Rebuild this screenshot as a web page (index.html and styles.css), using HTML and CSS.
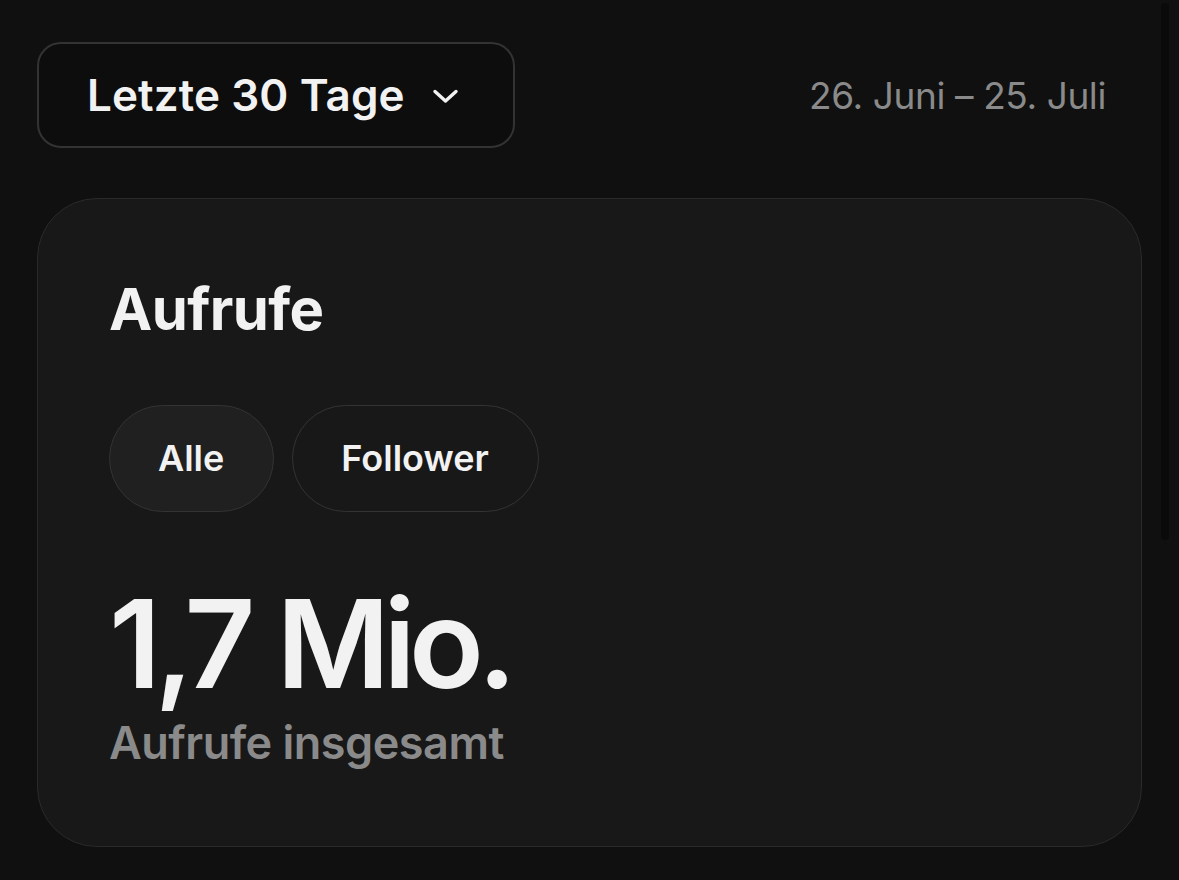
FILE: index.html
```html
<!DOCTYPE html>
<html lang="de">
<head>
<meta charset="utf-8">
<title>Aufrufe</title>
<link rel="stylesheet" href="styles.css">
</head>
<body>
<div class="page">
  <div class="topbar">
    <button class="range-btn" type="button">
      <span class="range-label">Letzte 30 Tage</span>
      <svg class="chev" width="27" height="17" viewBox="0 0 27 17" aria-hidden="true">
        <path d="M3 3.5 L13.5 13 L24 3.5" fill="none" stroke="#f2f2f2" stroke-width="3.4" stroke-linecap="round" stroke-linejoin="round"/>
      </svg>
    </button>
    <div class="date-range">26. Juni – 25. Juli</div>
  </div>

  <section class="card">
    <h2 class="card-title">Aufrufe</h2>
    <div class="pills">
      <button class="pill pill-active" type="button">Alle</button>
      <button class="pill" type="button">Follower</button>
    </div>
    <div class="metric">
      <div class="metric-value">1,7 Mio.</div>
      <div class="metric-label">Aufrufe insgesamt</div>
    </div>
  </section>
</div>
<div class="scroll-thumb"></div>
</body>
</html>
```

FILE: styles.css
```css
html, body {
  margin: 0;
  padding: 0;
  background: #101010;
  height: 100%;
  overflow: hidden;
}

body {
  font-family: Inter, "Noto Sans", "Liberation Sans", sans-serif;
  color: #f2f2f2;
}

.page {
  padding: 42px 37px 0 37px;
}

.topbar {
  display: flex;
  align-items: center;
  justify-content: space-between;
  padding-right: 36px;
}

.range-btn {
  display: flex;
  align-items: center;
  gap: 27px;
  height: 106px;
  box-sizing: border-box;
  padding: 0 54px 0 48px;
  background: #0d0d0d;
  border: 2px solid #333333;
  border-radius: 24px;
  color: #f2f2f2;
  font-family: inherit;
  cursor: pointer;
}

.range-label {
  font-size: 44px;
  font-weight: 600;
  letter-spacing: 0.1px;
}

.chev {
  display: block;
  margin-top: 2px;
}

.date-range {
  font-size: 37px;
  font-weight: 400;
  color: #8a8a8a;
  letter-spacing: -0.4px;
}

.card {
  margin-top: 50px;
  background: #181818;
  border: 1px solid #2a2a2a;
  border-radius: 60px;
  padding: 76px 72px 76px 71px;
  box-sizing: border-box;
  height: 649px;
}

.card-title {
  margin: 0;
  font-size: 58px;
  font-weight: 700;
  line-height: 1.2;
  letter-spacing: -0.6px;
}

.pills {
  display: flex;
  gap: 18px;
  margin-top: 60px;
}

.pill {
  height: 107px;
  box-sizing: border-box;
  padding: 0 49px 0 48px;
  border-radius: 54px;
  border: 1px solid #333333;
  background: transparent;
  color: #f2f2f2;
  font-family: inherit;
  font-size: 36px;
  font-weight: 600;
  cursor: pointer;
}

.pill-active {
  background: #202020;
}

.metric {
  margin-top: 70px;
}

.metric-value {
  font-size: 123px;
  font-weight: 600;
  line-height: 1;
  letter-spacing: -6.5px;
  word-spacing: 3px;
}

.metric-label {
  margin-top: 10px;
  font-size: 45px;
  font-weight: 600;
  color: #8a8a8a;
  letter-spacing: -0.5px;
}

.scroll-thumb {
  position: fixed;
  top: 3px;
  left: 1161px;
  width: 8px;
  height: 537px;
  background: #0a0a0a;
  border-radius: 4px;
}
```
